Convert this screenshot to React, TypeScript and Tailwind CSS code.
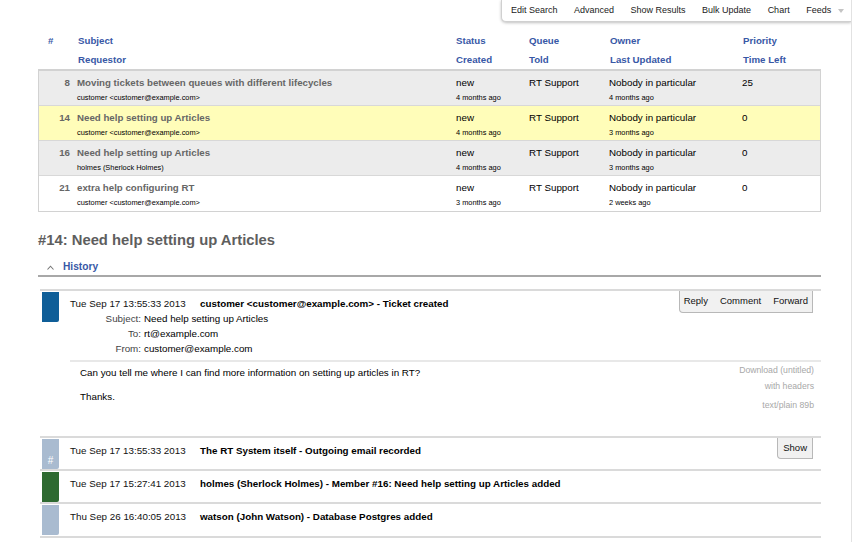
import React from 'react';

const tickets = [
  { id: 8, subject: 'Moving tickets between queues with different lifecycles', requestor: 'customer <customer@example.com>', status: 'new', created: '4 months ago', queue: 'RT Support', owner: 'Nobody in particular', updated: '4 months ago', priority: '25', bg: 'bg-[#ececec]' },
  { id: 14, subject: 'Need help setting up Articles', requestor: 'customer <customer@example.com>', status: 'new', created: '4 months ago', queue: 'RT Support', owner: 'Nobody in particular', updated: '3 months ago', priority: '0', bg: 'bg-[#fffdb9]' },
  { id: 16, subject: 'Need help setting up Articles', requestor: 'holmes (Sherlock Holmes)', status: 'new', created: '4 months ago', queue: 'RT Support', owner: 'Nobody in particular', updated: '3 months ago', priority: '0', bg: 'bg-[#ececec]' },
  { id: 21, subject: 'extra help configuring RT', requestor: 'customer <customer@example.com>', status: 'new', created: '3 months ago', queue: 'RT Support', owner: 'Nobody in particular', updated: '2 weeks ago', priority: '0', bg: 'bg-white' },
];

const cols = 'grid grid-cols-[38px_379px_73px_80px_133px_1fr]';

function Transaction({ color, date, desc, children, action, hash, last }: {
  color: string; date: string; desc: string; children?: React.ReactNode; action?: React.ReactNode; hash?: boolean; last?: boolean;
}) {
  return (
    <div className={`relative ml-[2px] border-t-2 border-[#dadada] ${last ? 'border-b-2 pb-[1px]' : ''}`}>
      {action}
      <div className="flex items-start">
        <div className={`ml-[2px] mt-[1px] flex h-[30px] w-[17px] shrink-0 items-end justify-center rounded-br-[2px] ${color}`}>
          {hash && <span className="pb-[3px] text-[10px] leading-none text-white">#</span>}
        </div>
        <div className="ml-[11px] flex-1">
          <div className="flex pt-[6px] text-[9.8px] leading-[14px]">
            <span className="w-[130px] text-[#111]">{date}</span>
            <span className="font-bold text-black">{desc}</span>
          </div>
          {children}
        </div>
      </div>
    </div>
  );
}

export default function App() {
  return (
    <div className="relative h-[542px] w-[852px] overflow-hidden border-r border-[#e2e2e2] bg-white font-['Liberation_Sans',Arial,sans-serif] text-black">
      {/* top menu */}
      <div className="flex justify-end">
        <div className="flex h-[22px] w-[350px] items-center gap-[16.5px] rounded-bl-[5px] border-b border-l border-[#d0d0d0] bg-white pl-[9px] pt-[1px] text-[9px] text-[#222] shadow-[0_1px_3px_rgba(0,0,0,0.25)]">
          <span>Edit Search</span>
          <span>Advanced</span>
          <span>Show Results</span>
          <span>Bulk Update</span>
          <span>Chart</span>
          <span className="flex items-center gap-[7px]">
            Feeds
            <svg width="6" height="4" viewBox="0 0 6 4"><path d="M0 0h6L3 4z" fill="#c4c4c4" /></svg>
          </span>
        </div>
      </div>

      <div className="ml-[38px] w-[783px]">
        {/* header */}
        <div className="pt-[9px] text-[9.7px] font-bold leading-[19px] text-[#3858a6]">
          <div className={cols}>
            <span className="pl-[10px]">#</span>
            <span className="pl-[2px]">Subject</span>
            <span className="pl-[1px]">Status</span>
            <span className="pl-[1px]">Queue</span>
            <span className="pl-[2px]">Owner</span>
            <span className="pl-[2px]">Priority</span>
          </div>
          <div className={cols}>
            <span />
            <span className="pl-[2px]">Requestor</span>
            <span className="pl-[1px]">Created</span>
            <span className="pl-[1px]">Told</span>
            <span className="pl-[2px]">Last Updated</span>
            <span className="pl-[2px]">Time Left</span>
          </div>
        </div>

        {/* ticket rows */}
        <div className="border-x border-t-2 border-b border-[#d2d2d2]">
          {tickets.map((t, i) => (
            <div key={t.id} className={`${cols} h-[35px] pt-[5px] ${t.bg} ${i < tickets.length - 1 ? 'border-b border-[#d8d8d8]' : ''}`}>
              <span className="pr-[7px] text-right text-[9.7px] font-bold leading-[13px] text-[#666]">{t.id}</span>
              <div>
                <div className="text-[9.7px] font-bold leading-[13px] text-[#666]">{t.subject}</div>
                <div className="mt-[4px] text-[7.4px] leading-[10px]">{t.requestor}</div>
              </div>
              <div>
                <div className="text-[9.8px] leading-[13px]">{t.status}</div>
                <div className="mt-[4px] text-[7.4px] leading-[10px]">{t.created}</div>
              </div>
              <div className="text-[9.8px] leading-[13px]">{t.queue}</div>
              <div>
                <div className="text-[9.8px] leading-[13px]">{t.owner}</div>
                <div className="mt-[4px] text-[7.4px] leading-[10px]">{t.updated}</div>
              </div>
              <div className="text-[9.8px] leading-[13px]">{t.priority}</div>
            </div>
          ))}
        </div>

        {/* ticket title */}
        <h1 className="mt-[19px] text-[14.8px] font-bold leading-[18px] text-[#5e5e5e]">#14: Need help setting up Articles</h1>

        {/* history */}
        <div className="mt-[12px] flex h-[16px] items-center border-b-2 border-[#a8a8a8] pb-[2px]">
          <svg className="ml-[9px]" width="7" height="5" viewBox="0 0 7 5"><path d="M0.5 4.5L3.5 1.2L6.5 4.5" fill="none" stroke="#777" strokeWidth="1.1" /></svg>
          <span className="ml-[9px] text-[10.2px] font-bold text-[#3858a6]">History</span>
        </div>

        <div className="mt-[12px]">
          <Transaction
            color="bg-[#0f5e98]"
            date="Tue Sep 17 13:55:33 2013"
            desc="customer <customer@example.com> - Ticket created"
            action={
              <div className="absolute right-[8px] top-0 flex h-[22px] items-center gap-[12px] rounded-bl-[4px] border-x border-b border-[#b8b8b8] bg-[#f1f1f1] px-[4px] text-[9.5px] text-[#111]">
                <span>Reply</span>
                <span>Comment</span>
                <span>Forward</span>
              </div>
            }
          >
            <div className="text-[9.8px] leading-[15px]">
              <div className="flex"><span className="w-[74px] pr-[3px] text-right text-[#444]">Subject:</span><span>Need help setting up Articles</span></div>
              <div className="flex"><span className="w-[74px] pr-[3px] text-right text-[#444]">To:</span><span>rt@example.com</span></div>
              <div className="flex"><span className="w-[74px] pr-[3px] text-right text-[#444]">From:</span><span>customer@example.com</span></div>
            </div>
            <div className="mt-[4px] flex h-[76px] justify-between border-t-2 border-[#e8e8e8] pl-[10px] pr-[7px]">
              <div className="pt-[4px] text-[9.8px] leading-[14px]">
                <p>Can you tell me where I can find more information on setting up articles in RT?</p>
                <p className="mt-[10px]">Thanks.</p>
              </div>
              <div className="flex flex-col items-end pt-[2px] text-[8.7px] leading-[12px] text-[#a8a8a8]">
                <span>Download (untitled)</span>
                <span className="mt-[4px]">with headers</span>
                <span className="mt-[7px]">text/plain 89b</span>
              </div>
            </div>
          </Transaction>
          <Transaction
            color="bg-[#a9bbd0]"
            hash
            date="Tue Sep 17 13:55:33 2013"
            desc="The RT System itself - Outgoing email recorded"
            action={
              <div className="absolute right-[8px] top-0 flex h-[21px] items-center rounded-bl-[4px] border-x border-b border-[#b8b8b8] bg-[#f1f1f1] px-[5px] text-[9.5px] text-[#111]">
                Show
              </div>
            }
          />
          <Transaction color="bg-[#2e6a31]" date="Tue Sep 17 15:27:41 2013" desc="holmes (Sherlock Holmes) - Member #16: Need help setting up Articles added" />
          <Transaction color="bg-[#a9bbd0]" date="Thu Sep 26 16:40:05 2013" desc="watson (John Watson) - Database Postgres added" last />
        </div>
      </div>
    </div>
  );
}
